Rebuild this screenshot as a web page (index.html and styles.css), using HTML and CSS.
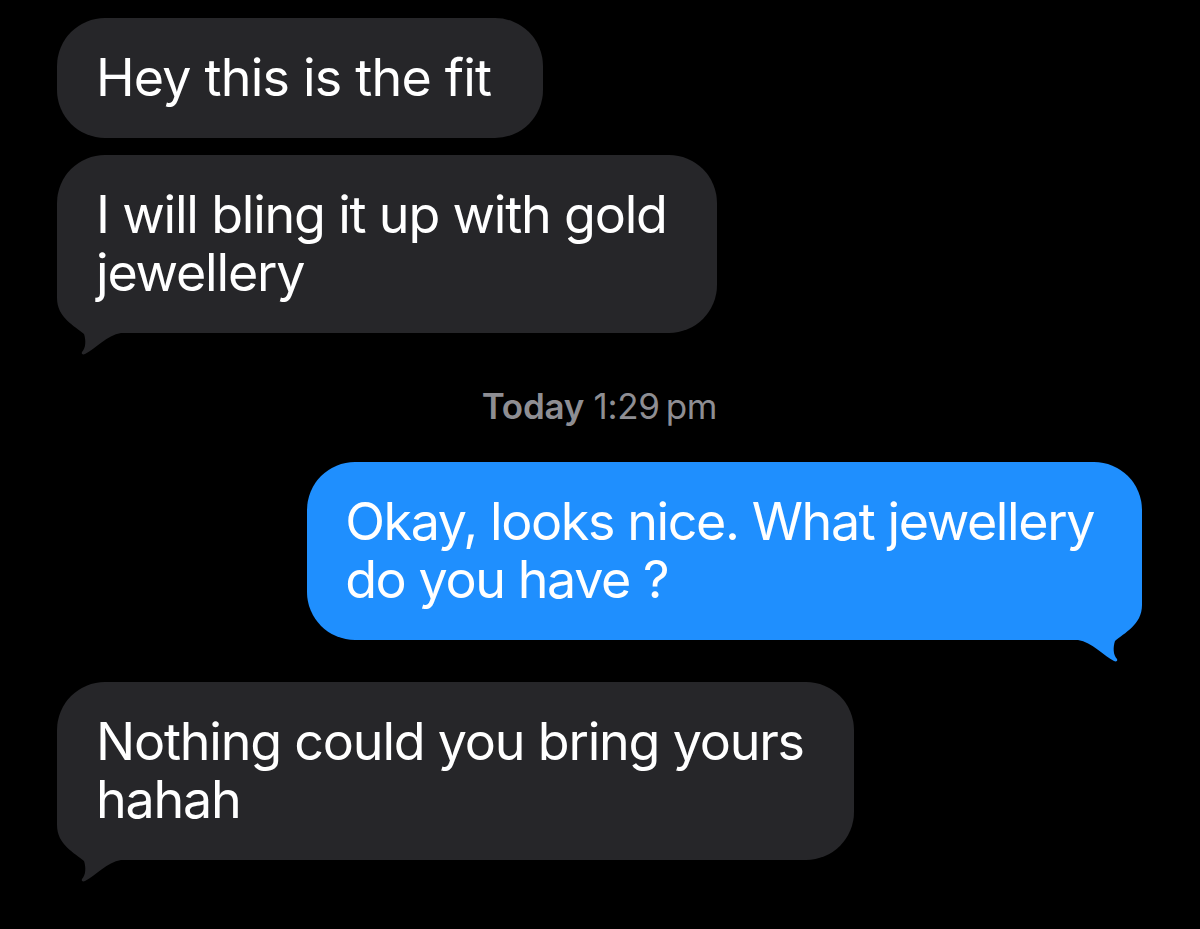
FILE: index.html
```html
<!DOCTYPE html>
<html>
<head>
<meta charset="utf-8">
<link rel="stylesheet" href="styles.css">
</head>
<body>
<div class="thread">
  <div class="bubble received loose"><span class="text">Hey this is the fit</span></div>
  <div class="bubble received tailed"><span class="text">I will bling it up with gold<br>jewellery</span><svg class="tail" viewBox="0 0 64 70" width="64" height="70"><path d="M0,0 L0,13 C0,33 18,41 27,49 C29,55 29,63 25,67 C24,69 26,70 28,69 C38,64 50,50 64,48 L64,0 Z"/></svg></div>
  <div class="stamp"><span class="day">Today</span> 1:29&#8201;pm</div>
  <div class="bubble sent tailed"><span class="text">Okay, looks nice. What jewellery<br>do you have ?</span><svg class="tail" viewBox="0 0 64 70" width="64" height="70"><path d="M0,0 L0,13 C0,33 18,41 27,49 C29,55 29,63 25,67 C24,69 26,70 28,69 C38,64 50,50 64,48 L64,0 Z"/></svg></div>
  <div class="bubble received tailed gap-lg"><span class="text">Nothing could you bring yours<br>hahah</span><svg class="tail" viewBox="0 0 64 70" width="64" height="70"><path d="M0,0 L0,13 C0,33 18,41 27,49 C29,55 29,63 25,67 C24,69 26,70 28,69 C38,64 50,50 64,48 L64,0 Z"/></svg></div>
</div>
</body>
</html>
```
FILE: styles.css
```css
html, body {
  margin: 0;
  padding: 0;
  background: #000;
}
body {
  width: 1200px;
  height: 929px;
  overflow: hidden;
  font-family: "Inter", "Roboto", "Liberation Sans", sans-serif;
}
.thread {
  display: flex;
  flex-direction: column;
  align-items: flex-start;
  padding: 18px 58px 0 57px;
}
.bubble {
  position: relative;
  box-sizing: border-box;
  padding: 31px 50px 31px 39px;
  border-radius: 48px;
  font-size: 52px;
  line-height: 58px;
  color: #fff;
  letter-spacing: -1.2px;
}
.loose {
  letter-spacing: -0.8px;
  padding-right: 52px;
}
.text {
  position: relative;
  z-index: 1;
}
.received {
  background: #262629;
}
.received + .received {
  margin-top: 17px;
}
.sent {
  align-self: flex-end;
  background: #1f8ffe;
  padding: 31px 48px 31px 38px;
  letter-spacing: -1.4px;
}
.gap-lg {
  margin-top: 42px;
}
.tail {
  position: absolute;
  bottom: -22px;
  left: 0;
  display: block;
  z-index: 0;
}
.received .tail path {
  fill: #262629;
}
.sent .tail {
  left: auto;
  right: 0;
  transform: scaleX(-1);
}
.sent .tail path {
  fill: #1f8ffe;
}
.stamp {
  align-self: center;
  margin: 52px 0 35px;
  font-size: 35px;
  line-height: 42px;
  color: #8e8e93;
  letter-spacing: -0.3px;
}
.day {
  font-weight: 600;
}
```
